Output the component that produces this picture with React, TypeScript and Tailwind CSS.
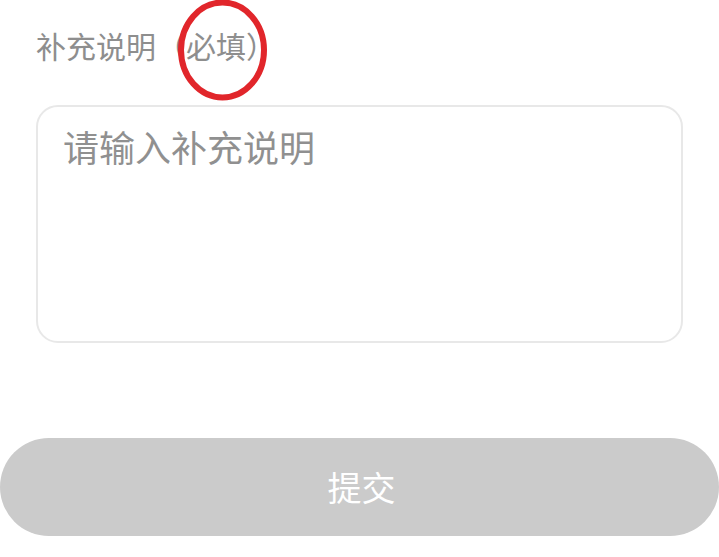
import React from "react";

export default function App() {
  const font = { fontFamily: '"Noto Sans CJK SC", "Noto Sans", sans-serif' };
  return (
    <div className="relative w-[719px] h-[557px] bg-white overflow-hidden" style={font}>
      <div className="flex flex-col">
        <div className="mt-[30px] pl-[36px] h-[30px] text-[30px] leading-[30px] text-[#8e8e8e] whitespace-nowrap">
          补充说明（必填）
        </div>
        <div className="mt-[45px] ml-[36px] w-[647px] h-[238px] rounded-[22px] border-2 border-[#e8e8e8] bg-white pt-[21px] pl-[25px] pr-[25px]">
          <textarea
            className="w-full h-full resize-none outline-none bg-transparent text-[36px] leading-[36px] text-[#555] placeholder:text-[#909090]"
            style={font}
            placeholder="请输入补充说明"
          />
        </div>
        <button
          className="mt-[95px] w-[719px] h-[98px] rounded-full bg-[#cbcbcb] text-white text-[34px] leading-[34px] flex items-center justify-center pl-[4px]"
          style={font}
        >
          提交
        </button>
      </div>
      <svg
        className="absolute left-0 top-0 pointer-events-none"
        width="719"
        height="557"
        viewBox="0 0 719 557"
      >
        <ellipse cx="222.5" cy="50" rx="41.5" ry="47.5" fill="none" stroke="#e1262b" strokeWidth="6" />
      </svg>
    </div>
  );
}
